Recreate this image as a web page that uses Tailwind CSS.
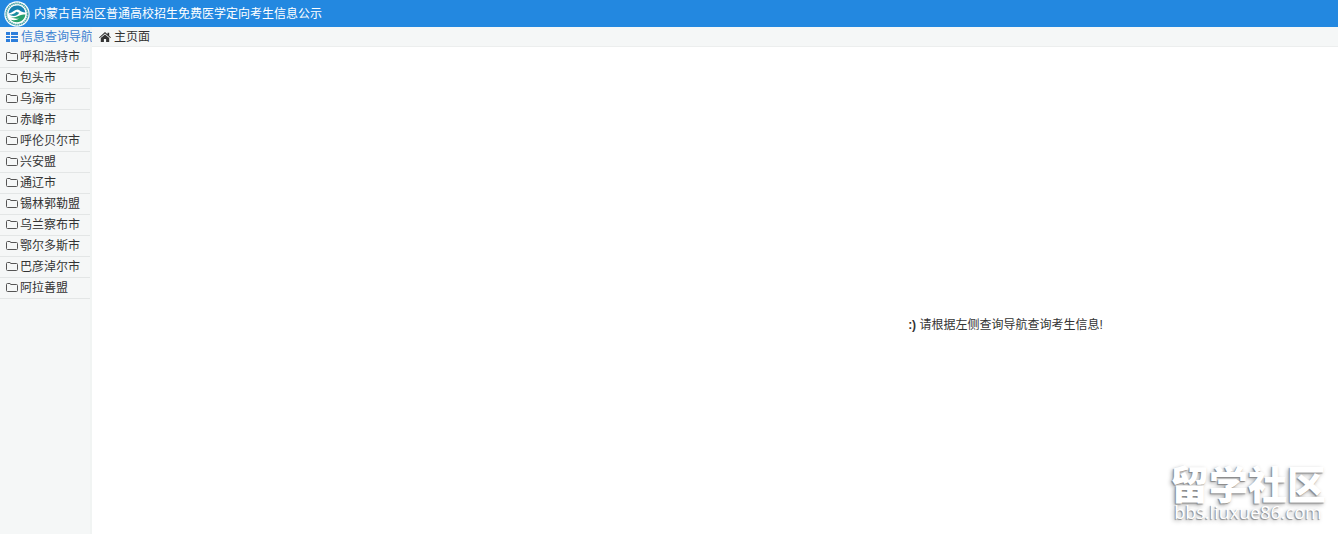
<!DOCTYPE html>
<html lang="zh-CN">
<head>
<meta charset="utf-8">
<meta name="viewport" content="width=device-width, initial-scale=1">
<title>内蒙古自治区普通高校招生免费医学定向考生信息公示</title>
<script src="https://cdn.jsdelivr.net/npm/@tailwindcss/browser@4"></script>
</head>
<body class="relative flex min-h-screen flex-col overflow-x-hidden bg-white font-['Liberation_Sans','Noto_Sans_CJK_SC',sans-serif] text-xs text-[#333]">
<svg class="hidden" aria-hidden="true">
  <symbol id="folder" viewBox="0 0 12 12"><path d="M.5 8.5V2.5Q.5 1.5 1.5 1.5H4Q4.5 1.5 4.7 2.5H10.5Q11.5 2.5 11.5 3.5V8.5Q11.5 9.5 10.5 9.5H1.5Q.5 9.5.5 8.5Z" fill="none" stroke="#555" stroke-width="1"/></symbol>
</svg>

<header class="flex h-[27px] items-center gap-1 bg-[#2388e0] pl-1 text-white">
  <svg class="size-[26px] shrink-0" viewBox="0 0 26 26" aria-hidden="true">
    <circle cx="13" cy="13" r="12.7" fill="#fff"/>
    <circle cx="13" cy="13" r="10.7" fill="none" stroke="#4aa5a8" stroke-width="1.8" stroke-dasharray="1.6 .5"/>
    <circle cx="13" cy="13" r="9" fill="#fff"/>
    <path d="M4.6 12.5C5 7.5 8.5 4.6 13 4.6S20.6 7.3 21.4 11.5C18.5 11.3 17.2 10.5 15.5 9.2C12 6.7 10.2 11 4.6 12.5Z" fill="#1681b0"/>
    <path d="M5 13.6Q10.5 13.6 12.2 10.8L15.2 11.8Q13.7 14.8 10 15Q7 15.1 5 13.6Z" fill="#1b8ca0"/>
    <path d="M4.9 15.6Q10 17.6 14.3 15.1Q17.8 12.8 21.4 13.6Q20.8 18.3 17 20.3Q11.5 23 6.5 18.7Q12 20 15.3 17.4Q10.3 18.4 4.9 15.6Z" fill="#27a06c"/>
  </svg>
  <h1 class="whitespace-nowrap leading-5">内蒙古自治区普通高校招生免费医学定向考生信息公示</h1>
</header>

<div class="flex flex-1">
  <aside class="w-[92px] shrink-0 border-r-2 border-[#f1f4f3] bg-[#f5f7f7]">
    <h2 class="flex h-5 items-center gap-[3px] whitespace-nowrap pl-1.5 text-[#3c82d2]">
      <svg class="size-3 shrink-0" viewBox="0 0 12 12" fill="#2c7edb" aria-hidden="true"><path d="M0 1h4v3H0zM5 1h7v3H5zM0 5h4v2H0zM5 5h7v2H5zM0 8h4v3H0zM5 8h7v3H5z"/></svg>
      <span>信息查询导航</span>
    </h2>
    <nav aria-label="信息查询导航">
      <ul class="[&_a]:flex [&_a]:h-[21px] [&_a]:items-center [&_a]:gap-0.5 [&_a]:whitespace-nowrap [&_a]:border-b [&_a]:border-[#e3e6e6] [&_a]:pl-1.5 [&_svg]:size-3 [&_svg]:shrink-0">
        <li><a href="#"><svg aria-hidden="true"><use href="#folder"/></svg>呼和浩特市</a></li>
        <li><a href="#"><svg aria-hidden="true"><use href="#folder"/></svg>包头市</a></li>
        <li><a href="#"><svg aria-hidden="true"><use href="#folder"/></svg>乌海市</a></li>
        <li><a href="#"><svg aria-hidden="true"><use href="#folder"/></svg>赤峰市</a></li>
        <li><a href="#"><svg aria-hidden="true"><use href="#folder"/></svg>呼伦贝尔市</a></li>
        <li><a href="#"><svg aria-hidden="true"><use href="#folder"/></svg>兴安盟</a></li>
        <li><a href="#"><svg aria-hidden="true"><use href="#folder"/></svg>通辽市</a></li>
        <li><a href="#"><svg aria-hidden="true"><use href="#folder"/></svg>锡林郭勒盟</a></li>
        <li><a href="#"><svg aria-hidden="true"><use href="#folder"/></svg>乌兰察布市</a></li>
        <li><a href="#"><svg aria-hidden="true"><use href="#folder"/></svg>鄂尔多斯市</a></li>
        <li><a href="#"><svg aria-hidden="true"><use href="#folder"/></svg>巴彦淖尔市</a></li>
        <li><a href="#"><svg aria-hidden="true"><use href="#folder"/></svg>阿拉善盟</a></li>
      </ul>
    </nav>
  </aside>

  <div class="flex min-w-0 flex-1 flex-col">
    <div class="flex h-5 items-center gap-[3px] border-b border-[#eceeee] bg-[#f5f7f7] pl-[7px]">
      <svg class="size-3 shrink-0" viewBox="0 0 12 12" fill="#333" aria-hidden="true"><path d="M6 1L8.5 3.3V1.7H10.2V4.8L12 6.4L11.3 7.1L6 2.5L.7 7.1L0 6.4Z"/><path d="M6 3.5L10.2 7.1V11H7.1V8H4.9V11H1.8V7.1Z"/></svg>
      <span>主页面</span>
    </div>
    <main class="flex-1 pt-[268px] pl-[65.5%]">
      <p class="whitespace-nowrap leading-5"><b>:)</b> 请根据左侧查询导航查询考生信息!</p>
    </main>
  </div>
</div>

<div class="pointer-events-none absolute right-3 bottom-3.5 text-center text-white [text-shadow:-1px_1px_1px_#888,-2px_2px_4px_#aaa]">
  <p class="text-[39px] leading-9 font-black">留学社区</p>
  <p class="font-['Open_Sans',sans-serif] text-lg leading-4">bbs.liuxue86.com</p>
</div>
</body>
</html>
